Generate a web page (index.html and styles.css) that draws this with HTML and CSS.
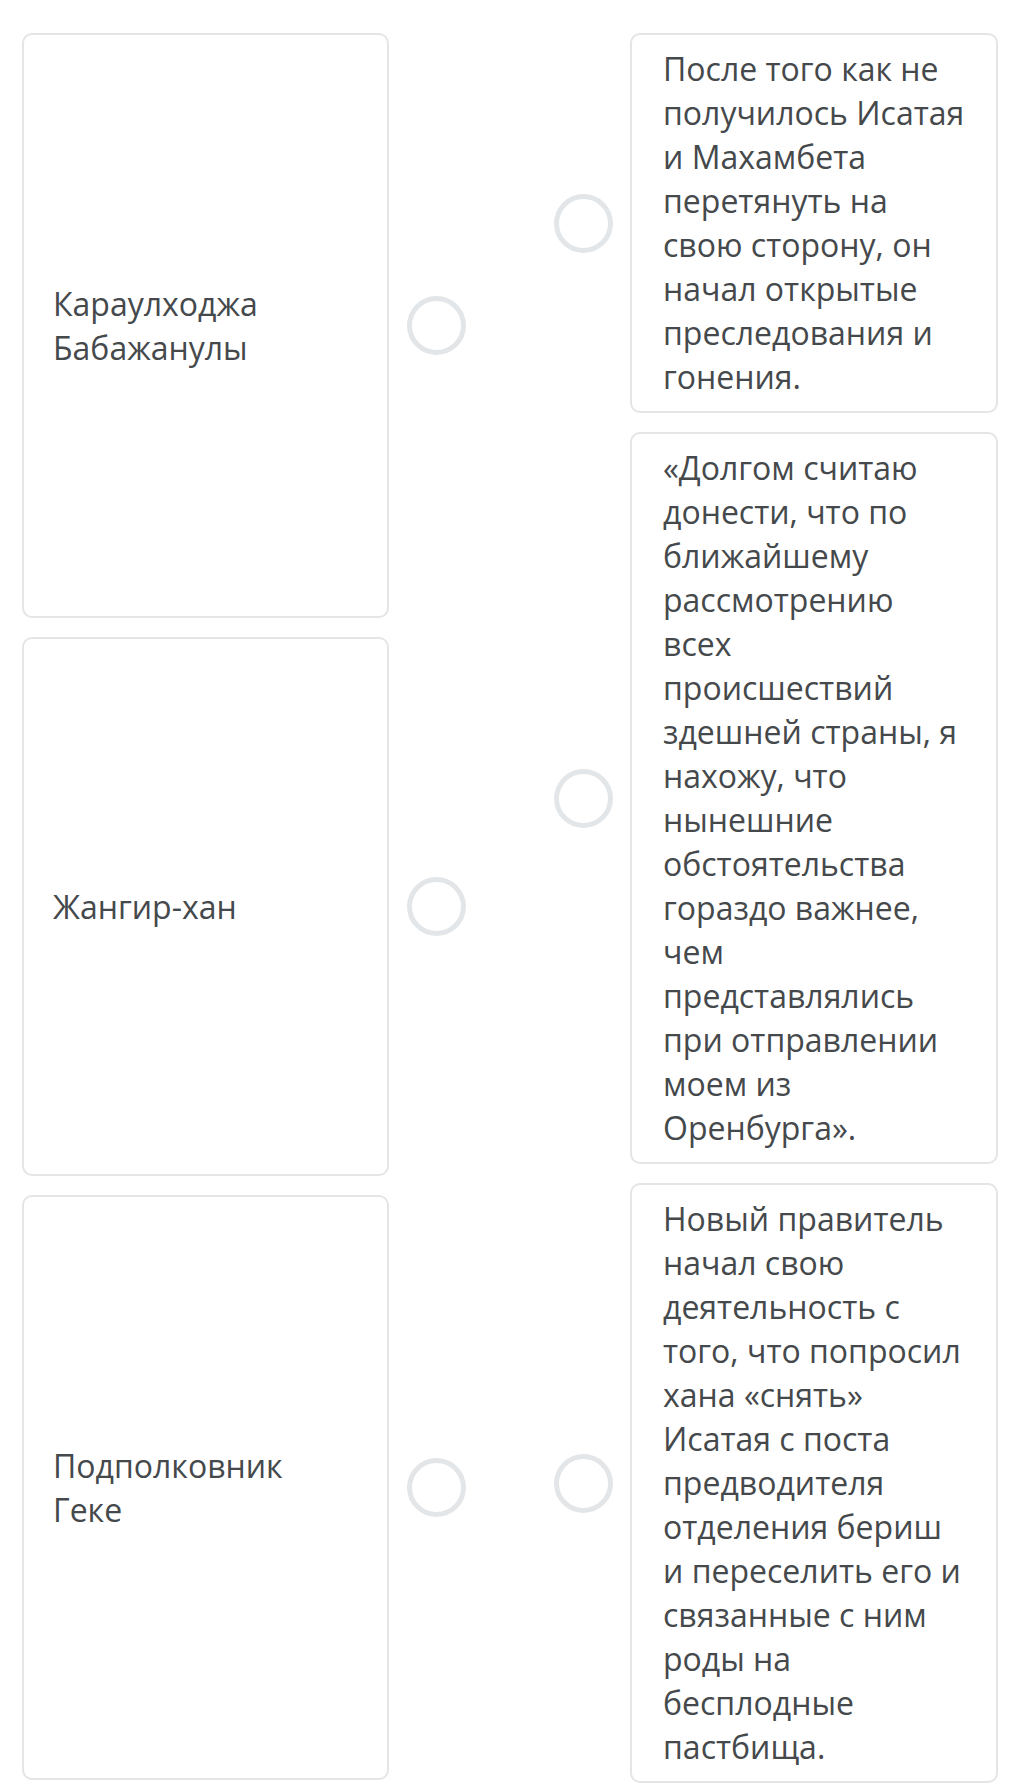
FILE: index.html
```html
<!DOCTYPE html>
<html lang="ru">
<head>
  <meta charset="UTF-8">
  <meta name="viewport" content="width=device-width, initial-scale=1.0">
  <title>Сопоставление</title>
  <link rel="stylesheet" href="styles.css">
</head>
<body>
  <div class="board">
    <div class="column column-left">
      <div class="pair">
        <div class="card card-term card-tall">
          <p>Караулходжа Бабажанулы</p>
        </div>
        <span class="dot"></span>
      </div>
      <div class="pair">
        <div class="card card-term card-short">
          <p>Жангир-хан</p>
        </div>
        <span class="dot"></span>
      </div>
      <div class="pair">
        <div class="card card-term card-tall">
          <p>Подполковник Геке</p>
        </div>
        <span class="dot"></span>
      </div>
    </div>

    <div class="column column-right">
      <div class="pair">
        <span class="dot"></span>
        <div class="card card-answer">
          <p>После того как не получилось Исатая и Махамбета перетянуть на свою сторону, он начал открытые преследования и гонения.</p>
        </div>
      </div>
      <div class="pair">
        <span class="dot"></span>
        <div class="card card-answer">
          <p>«Долгом считаю донести, что по ближайшему рассмотрению всех происшествий здешней страны, я нахожу, что нынешние обстоятельства гораздо важнее, чем представлялись при отправлении моем из Оренбурга».</p>
        </div>
      </div>
      <div class="pair">
        <span class="dot"></span>
        <div class="card card-answer">
          <p>Новый правитель начал свою деятельность с того, что попросил хана «снять» Исатая с поста предводителя отделения бериш и переселить его и связанные с ним роды на бесплодные пастбища.</p>
        </div>
      </div>
    </div>
  </div>
</body>
</html>
```

FILE: styles.css
```css
* {
  margin: 0;
  padding: 0;
  box-sizing: border-box;
}

body {
  background: #ffffff;
  font-family: 'Open Sans', 'Noto Sans', sans-serif;
  color: #45494c;
}

.board {
  display: flex;
  gap: 88px;
  padding: 33px 19px 8px 22px;
}

.column {
  width: 444px;
  display: flex;
  flex-direction: column;
  gap: 19px;
}

.pair {
  display: flex;
  align-items: center;
}

.column-left .pair {
  gap: 18px;
}

.column-right .pair {
  gap: 17px;
}

.card {
  background: #ffffff;
  border: 2px solid #e4e5e7;
  border-radius: 10px;
  font-size: 32px;
  line-height: 44px;
}

.card-term {
  width: 367px;
  display: flex;
  align-items: center;
  padding: 0 30px 0 29px;
}

.card-tall {
  height: 585px;
}

.card-short {
  height: 539px;
}

.card-answer {
  width: 368px;
  padding: 12px 27px 12px 31px;
}

.dot {
  flex: none;
  width: 59px;
  height: 59px;
  border: 5px solid #e3e6e9;
  border-radius: 50%;
}
```
